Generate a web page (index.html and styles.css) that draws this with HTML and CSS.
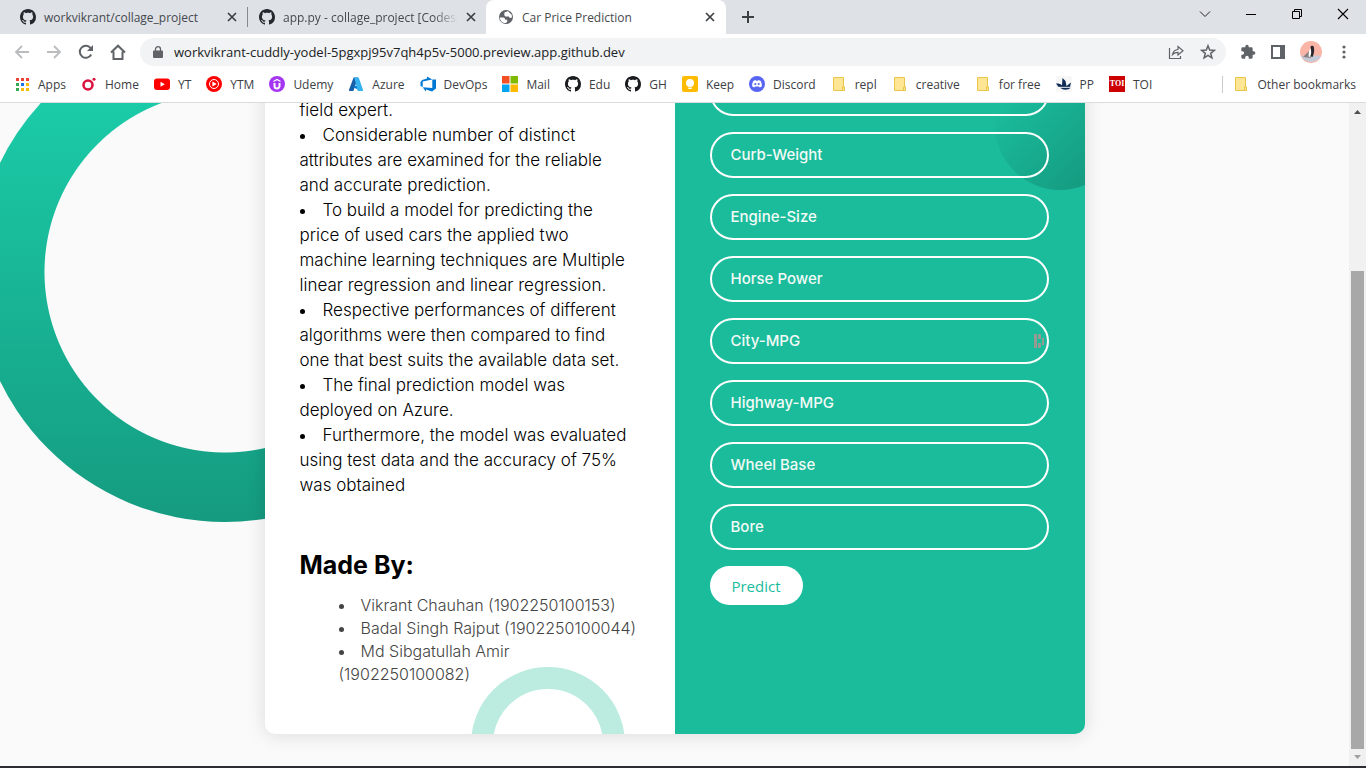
FILE: index.html
```html
<!DOCTYPE html>
<html lang="en">
<head>
<meta charset="utf-8">
<title>Car Price Prediction</title>
<link rel="stylesheet" href="styles.css">
</head>
<body>
<svg class="defs" aria-hidden="true">
  <symbol id="github" viewBox="0 0 16 16"><path fill-rule="evenodd" d="M8 0C3.58 0 0 3.58 0 8c0 3.54 2.29 6.53 5.47 7.59.4.07.55-.17.55-.38 0-.19-.01-.82-.01-1.49-2.01.37-2.53-.49-2.69-.94-.09-.23-.48-.94-.82-1.13-.28-.15-.68-.52-.01-.53.63-.01 1.08.58 1.23.82.72 1.21 1.87.87 2.33.66.07-.52.28-.87.51-1.07-1.78-.2-3.64-.89-3.64-3.95 0-.87.31-1.59.82-2.15-.08-.2-.36-1.02.08-2.12 0 0 .67-.21 2.2.82.64-.18 1.32-.27 2-.27s1.36.09 2 .27c1.53-1.04 2.2-.82 2.2-.82.44 1.1.16 1.92.08 2.12.51.56.82 1.27.82 2.15 0 3.07-1.87 3.75-3.65 3.95.29.25.54.73.54 1.48 0 1.07-.01 1.93-.01 2.2 0 .21.15.46.55.38A8 8 0 0 0 16 8c0-4.42-3.58-8-8-8z"/></symbol>
  <symbol id="cross" viewBox="0 0 10 10"><path d="M1 1l8 8M9 1L1 9" fill="none" stroke="#3c4043" stroke-width="1.7"/></symbol>
  <symbol id="folder" viewBox="0 0 16 16"><path d="M2.500 1.500h10v9.500h1v3.500h-11z" fill="#ffe694" stroke="#e8c54c"/><path d="M11.500 14.500v-3.500h2v3.500z" fill="#ffe694" stroke="#e8c54c"/></symbol>
</svg>
<header class="browser">
  <div class="tabs">
    <div class="tab">
      <svg class="icon"><use href="#github"/></svg>
      <span class="tab-title">workvikrant/collage_project</span>
      <button class="plain" aria-label="Close tab"><svg class="close"><use href="#cross"/></svg></button>
    </div>
    <div class="tab tab-second">
      <svg class="icon"><use href="#github"/></svg>
      <span class="tab-title tab-fade">app.py - collage_project [Codesp</span>
      <button class="plain" aria-label="Close tab"><svg class="close"><use href="#cross"/></svg></button>
    </div>
    <div class="tab tab-active">
      <svg class="icon" viewBox="0 0 16 16"><circle cx="8" cy="8" r="7" fill="#5f6368"/><path d="M1.800 8.500h3.400c1.300.2 2 1 2 2.300h2v2.300l-1.500 1C4.300 14 2 11.700 1.800 8.500zM6.300 5.200c0-1.600.8-2.400 2.200-2.400l1.300-.8 3.900 3.700.3 2.600c-1.400 1-2.700.7-3.200-.8H8.300c-1.300 0-2-.8-2-2.300z" fill="#fff"/></svg>
      <span class="tab-title">Car Price Prediction</span>
      <button class="plain" aria-label="Close tab"><svg class="close"><use href="#cross"/></svg></button>
    </div>
    <button class="plain new-tab" aria-label="New tab"><svg width="12" height="12" viewBox="0 0 12 12"><path d="M6 0v12M0 6h12" stroke="#3c4043" stroke-width="2"/></svg></button>
    <div class="window-buttons">
      <button class="plain" aria-label="Search tabs"><svg width="12" height="12" viewBox="0 0 12 12"><path d="M1 3.500l5 5 5-5" fill="none" stroke="#222"/></svg></button>
      <button class="plain" aria-label="Minimize"><svg width="12" height="12" viewBox="0 0 12 12"><path d="M1 6.500h10" stroke="#000"/></svg></button>
      <button class="plain" aria-label="Restore"><svg width="12" height="12" viewBox="0 0 12 12"><path d="M1.500 3.500h7v7h-7zM3.500 3.500v-2h7v7h-2" fill="none" stroke="#000"/></svg></button>
      <button class="plain" aria-label="Close"><svg width="12" height="12" viewBox="0 0 12 12"><path d="M1 1l10 10M11 1L1 11" stroke="#000" stroke-width="1.100"/></svg></button>
    </div>
  </div>
  <div class="toolbar">
    <div class="nav">
      <button class="plain" aria-label="Back"><svg class="icon" viewBox="0 0 16 16"><path d="M15 8H2M8 2L2 8l6 6" fill="none" stroke="#babcbe" stroke-width="1.800"/></svg></button>
      <button class="plain" aria-label="Forward"><svg class="icon" viewBox="0 0 16 16"><path d="M1 8h13M8 2l6 6-6 6" fill="none" stroke="#babcbe" stroke-width="1.800"/></svg></button>
      <button class="plain" aria-label="Reload"><svg class="icon" viewBox="0 0 16 16"><path d="M13.200 10.500A6 6 0 1 1 12.600 4.200" fill="none" stroke="#5f6368" stroke-width="2"/><path d="M15 1v6H9z" fill="#5f6368"/></svg></button>
      <button class="plain" aria-label="Home"><svg class="icon" viewBox="0 0 16 16"><path d="M1 8.500L8 1.700l7 6.800M3.500 7.500V15h9V7.500" fill="none" stroke="#5f6368" stroke-width="2"/></svg></button>
    </div>
    <div class="address">
      <svg class="lock" viewBox="0 0 10 12"><path d="M1 4.500h8a1 1 0 0 1 1 1V11a1 1 0 0 1-1 1H1a1 1 0 0 1-1-1V5.500a1 1 0 0 1 1-1z" fill="#5f6368"/><path d="M2.500 5V3.200a2.500 2.500 0 0 1 5 0V5" fill="none" stroke="#5f6368" stroke-width="1.300"/></svg>
      <input class="url" aria-label="Address" value="workvikrant-cuddly-yodel-5pgxpj95v7qh4p5v-5000.preview.app.github.dev">
      <button class="plain" aria-label="Share"><svg class="icon" viewBox="0 0 16 16"><path d="M1.500 4v10.500h11v-2.500" fill="none" stroke="#5f6368" stroke-width="1.200"/><path d="M4.500 10.500c.6-3 2.400-4.700 5.500-5V2.500l5 4.300-5 4.200V8.300c-2.600 0-4.100.7-5.500 2.200z" fill="none" stroke="#5f6368" stroke-width="1.200"/></svg></button>
      <button class="plain" aria-label="Bookmark"><svg class="icon" viewBox="0 0 16 16"><path d="M8 1.800l1.700 4.300 4.600.3-3.600 2.900 1.200 4.500L8 11.300l-3.900 2.500 1.200-4.500-3.600-2.900 4.600-.3z" fill="none" stroke="#5f6368" stroke-width="1.500"/></svg></button>
    </div>
    <div class="actions">
      <button class="plain" aria-label="Extensions"><svg class="icon" viewBox="0 0 24 24"><path d="M20.500 11H19V7a2 2 0 0 0-2-2h-4V3.500a2.500 2.500 0 0 0-5 0V5H4a2 2 0 0 0-2 2v3.800h1.500a2.700 2.700 0 0 1 0 5.400H2V20c0 1.100.9 2 2 2h3.800v-1.500a2.700 2.700 0 0 1 5.400 0V22H17a2 2 0 0 0 2-2v-4h1.500a2.500 2.500 0 0 0 0-5z" fill="#5f6368"/></svg></button>
      <button class="plain" aria-label="Side panel"><svg class="icon" viewBox="0 0 16 16"><path d="M1 1h14v14H1zM3 3v10h7V3z" fill="#5f6368" fill-rule="evenodd"/></svg></button>
      <button class="plain" aria-label="Profile"><svg width="22" height="22" viewBox="0 0 22 22"><circle cx="11" cy="11" r="11" fill="#fbb5a7"/><path d="M1 14.500h20A11 11 0 0 1 1 14.500z" fill="#c5cad9"/><path d="M3 16l6-6 2 7z" fill="#8a8080"/><path d="M10.500 6c.3-1.200 2.500-1.800 3.300-.3.800 3 .3 6.800-1.300 10.300l-2.700-1c1.500-3 1.500-5.500.7-9z" fill="#29262b"/><path d="M10.200 7.500c1.600 2.500 1.300 6-.4 8.500l-1.100-.5c-.2-3 .1-6 1.500-8z" fill="#fff"/></svg></button>
      <button class="plain" aria-label="Menu"><svg class="icon" viewBox="0 0 16 16" fill="#5f6368"><circle cx="8" cy="3" r="1.600"/><circle cx="8" cy="8" r="1.600"/><circle cx="8" cy="13" r="1.600"/></svg></button>
    </div>
  </div>
  <nav class="bookmarks">
    <a href="#apps"><svg class="icon" viewBox="0 0 16 16"><path d="M2 2h3v3H2zM7 2h3v3H7zM12 2h3v3h-3z" fill="#ea4335"/><path d="M2 7h3v3H2zM2 12h3v3H2z" fill="#34a853"/><path d="M7 7h3v3H7z" fill="#1a73e8"/><path d="M12 7h3v3h-3zM7 12h3v3H7zM12 12h3v3h-3z" fill="#fbbc04"/></svg>Apps</a>
    <a href="#home"><svg class="icon" viewBox="0 0 16 16"><circle cx="7" cy="9" r="4.500" fill="none" stroke="#d9123e" stroke-width="2.600"/><circle cx="13" cy="3.200" r="1.500" fill="#d9123e"/></svg>Home</a>
    <a href="#yt"><svg class="icon" viewBox="0 0 16 16"><rect y="2.500" width="16" height="11.500" rx="3" fill="#f00"/><path d="M6.500 5.800v5l4.300-2.500z" fill="#fff"/></svg>YT</a>
    <a href="#ytm"><svg class="icon" viewBox="0 0 16 16"><circle cx="8" cy="8" r="8" fill="#f00"/><circle cx="8" cy="8" r="4.500" fill="none" stroke="#fff"/><path d="M6.400 5.500v5L10.700 8z" fill="#fff"/></svg>YTM</a>
    <a href="#udemy"><svg class="icon" viewBox="0 0 16 16"><circle cx="8" cy="8" r="8" fill="#a435f0"/><path d="M5.500 7v3a2.500 2.500 0 0 0 5 0V7" fill="none" stroke="#fff" stroke-width="2"/><path d="M4.500 5.500L8 3.500l3.500 2" fill="none" stroke="#fff" stroke-width="1.300"/></svg>Udemy</a>
    <a href="#azure"><svg class="icon" viewBox="0 0 16 16"><path d="M5.600 1.500h4.500L5.400 15H2a1 1 0 0 1-1-1.300z" fill="#175fa9"/><path d="M5 10h6.500l1 5L5 11z" fill="#0078d4"/><path d="M6.200 1.500h4.500L15 13.700a1 1 0 0 1-1 1.300h-4.300z" fill="#34b3ee"/></svg>Azure</a>
    <a href="#devops"><svg class="icon" viewBox="0 0 16 16"><path d="M16 3.400v9l-4 3.200-6-2.100v2.200l-3.300-4.500 9.600.8V3.500zM12.300 3.600L7 .5v2.100L2.100 4 .5 6v4l2.200 1V5.500z" fill="#0078d4"/></svg>DevOps</a>
    <a href="#mail"><svg class="icon" viewBox="0 0 16 16"><path d="M0 0h7.500v7.500H0z" fill="#f25022"/><path d="M8.500 0H16v7.500H8.500z" fill="#7fba00"/><path d="M0 8.500h7.500V16H0z" fill="#00a4ef"/><path d="M8.500 8.500H16V16H8.500z" fill="#ffb900"/></svg>Mail</a>
    <a href="#edu"><svg class="icon"><use href="#github"/></svg>Edu</a>
    <a href="#gh"><svg class="icon"><use href="#github"/></svg>GH</a>
    <a href="#keep"><svg class="icon" viewBox="0 0 16 16"><rect width="16" height="16" rx="2" fill="#fb0"/><circle cx="8" cy="7" r="4" fill="#fff"/><path d="M6.300 10h3.400v3H6.300z" fill="#fff"/><path d="M6 11.300h4" stroke="#fb0" stroke-width=".7"/></svg>Keep</a>
    <a href="#discord"><svg class="icon" viewBox="0 0 16 16"><circle cx="8" cy="8" r="8" fill="#5865f2"/><path d="M4.600 4.800l2-.8.400.8h2l.4-.8 2 .8c1.200 1.800 1.600 3.600 1.400 5.600l-2.200 1.200-.6-1H6l-.6 1-2.200-1.200c-.2-2 .2-3.800 1.400-5.600z" fill="#fff"/><circle cx="6.300" cy="8" r="1.100" fill="#5865f2"/><circle cx="9.700" cy="8" r="1.100" fill="#5865f2"/></svg>Discord</a>
    <a href="#repl"><svg class="icon"><use href="#folder"/></svg>repl</a>
    <a href="#creative"><svg class="icon"><use href="#folder"/></svg>creative</a>
    <a href="#free"><svg class="icon"><use href="#folder"/></svg>for free</a>
    <a href="#pp"><svg class="icon" viewBox="0 0 16 16"><path d="M0 0h16v16H0z" fill="#f7f7f7"/><path d="M0 7.500c3 0 5 .5 6 2L6.500 2l3 3 1 5 4.500-3.500-1 4.500H2.500zM4 11.500h11c-3 3-8 3-11 0z" fill="#102a56"/><path d="M2 11.300h13" stroke="#fff" stroke-width=".7"/></svg>PP</a>
    <a href="#toi"><span class="toi">TOI</span>TOI</a>
    <a class="other" href="#other"><svg class="icon"><use href="#folder"/></svg>Other bookmarks</a>
  </nav>
</header>

<div class="viewport">
  <main class="page">
    <span class="ring-large"></span>
    <section class="card">
      <div class="about">
        <ul class="points">
          <li class="continued">field expert.</li>
          <li>Considerable number of distinct<br>attributes are examined for the reliable<br>and accurate prediction.</li>
          <li>To build a model for predicting the<br>price of used cars the applied two<br>machine learning techniques are Multiple<br>linear regression and linear regression.</li>
          <li>Respective performances of different<br>algorithms were then compared to find<br>one that best suits the available data set.</li>
          <li>The final prediction model was<br>deployed on Azure.</li>
          <li>Furthermore, the model was evaluated<br>using test data and the accuracy of 75%<br>was obtained</li>
        </ul>
        <h2>Made By:</h2>
        <ul class="authors">
          <li>Vikrant Chauhan (1902250100153)</li>
          <li>Badal Singh Rajput (1902250100044)</li>
          <li>Md Sibgatullah Amir<br>(1902250100082)</li>
        </ul>
        <span class="ring-small"></span>
      </div>
      <form class="form">
        <span class="disc"></span>
        <input class="field" aria-label="Car width">
        <input class="field" aria-label="Curb-Weight" placeholder="Curb-Weight">
        <input class="field" aria-label="Engine-Size" placeholder="Engine-Size">
        <input class="field" aria-label="Horse Power" placeholder="Horse Power">
        <div class="field-wrap">
          <input class="field" aria-label="City-MPG" placeholder="City-MPG">
          <svg class="autofill" viewBox="0 0 12 14" fill="#959a92"><path d="M1 0h3v14H1zM5 0h2l1 1v4H5zM5 9h3v4l-1 1H5zM9 4h2v7H9z"/></svg>
        </div>
        <input class="field" aria-label="Highway-MPG" placeholder="Highway-MPG">
        <input class="field" aria-label="Wheel Base" placeholder="Wheel Base">
        <input class="field" aria-label="Bore" placeholder="Bore">
        <button class="predict" type="button">Predict</button>
      </form>
    </section>
  </main>
  <div class="scrollbar" aria-hidden="true">
    <svg class="arrow" viewBox="0 0 17 17"><path d="M5 11l3.500-4 3.500 4z" fill="#505050"/></svg>
    <div class="track"><div class="thumb"></div></div>
    <svg class="arrow" viewBox="0 0 17 17"><path d="M5 6l3.500 4L12 6z" fill="#a0a0a0"/></svg>
  </div>
</div>
<footer class="taskbar"></footer>
</body>
</html>
```
FILE: styles.css
```css
* { box-sizing: border-box; }

body {
  margin: 0;
  height: 100vh;
  display: flex;
  flex-direction: column;
  overflow: hidden;
  font-family: "Open Sans", "Noto Sans", sans-serif;
  font-size: 12px;
  color: #3c4043;
  background: #fafafa;
}

.defs { display: none; }
.icon { width: 16px; height: 16px; flex: none; }

.plain {
  display: flex;
  align-items: center;
  justify-content: center;
  padding: 0;
  border: 0;
  background: none;
}

/* Browser frame */
.browser { background: #fff; border-bottom: 1px solid #d9dbde; flex: none; }

.tabs { display: flex; height: 34px; background: #dee1e6; }

.tab {
  display: flex;
  align-items: center;
  gap: 8px;
  flex: none;
  width: 240px;
  padding: 0 11px 0 12px;
  color: #45494d;
}
.tab:first-child {
  width: 248px;
  padding-left: 20px;
  background: linear-gradient(#85888c, #85888c) right center / 1px 20px no-repeat;
}
.tab-second { width: 238px; padding-left: 11px; padding-right: 10px; }
.tab-active { background: #fff; border-radius: 8px 8px 0 0; }
.tab-title { flex: 1; min-width: 0; white-space: nowrap; }
.tab-fade { mask-image: linear-gradient(to right, #000 86%, transparent); }
.tab svg.icon { fill: #24292f; }
.close { width: 10px; height: 10px; }
.new-tab { width: 44px; }
.window-buttons { display: flex; margin-left: auto; height: 28px; }
.window-buttons .plain { width: 46px; }

.toolbar { display: flex; align-items: center; height: 36px; padding: 0 14px; }
.nav { display: flex; gap: 16px; padding-right: 14px; }
.address {
  display: flex;
  align-items: center;
  gap: 16px;
  flex: 1;
  height: 28px;
  padding: 0 10px 0 13px;
  border-radius: 14px;
  background: #f1f3f4;
}
.lock { width: 10px; height: 12px; }
.url {
  flex: 1;
  min-width: 0;
  margin-left: -5px;
  padding: 0;
  border: 0;
  background: none;
  font: 13px "Open Sans", sans-serif;
  color: #202124;
}
.actions { display: flex; align-items: center; gap: 14px; padding-left: 14px; }

.bookmarks { display: flex; align-items: center; gap: 15px; height: 32px; padding: 0 10px 4px 14px; }
.bookmarks a { display: flex; align-items: center; gap: 8px; color: #3c4043; text-decoration: none; white-space: nowrap; }
.bookmarks .icon { fill: #191b1f; }
.bookmarks .other { margin-left: auto; padding-left: 10px; border-left: 1px solid #c9cbce; }
.toi {
  width: 16px;
  height: 16px;
  background: #c00;
  color: #fff;
  font: bold 8px/16px "Liberation Serif", serif;
  text-align: center;
}

/* Web page */
.viewport { flex: 1; min-height: 0; display: flex; overflow: hidden; }
.page {
  position: relative;
  flex: 1;
  display: flex;
  flex-direction: column;
  justify-content: flex-end;
  align-items: center;
  padding-bottom: 32px;
  overflow: hidden;
  font-family: Inter, sans-serif;
}

.ring-large {
  position: absolute;
  left: -25px;
  bottom: 244px;
  width: 500px;
  height: 500px;
  border-radius: 50%;
  background: radial-gradient(circle, #fafafa 180px, transparent 181px), linear-gradient(#1cd4af, #159b80);
}

.card {
  position: relative;
  display: grid;
  grid-template-columns: 1fr 1fr;
  width: 100%;
  max-width: 820px;
  border-radius: 10px;
  background: #fff;
  box-shadow: 0 0 20px 1px rgba(0, 0, 0, 0.1), 0 5px 20px 1px rgba(0, 0, 0, 0.02);
  overflow: hidden;
  flex: none;
}

.about {
  position: relative;
  display: flex;
  flex-direction: column;
  justify-content: flex-end;
  padding: 0 35px 48px;
  color: #000;
  white-space: nowrap;
}
.points, .authors { margin: 0; padding: 0; list-style-position: inside; }
.points { font-size: 17px; font-weight: 300; line-height: 25px; }
.continued { list-style: none; }
.about h2 { margin: 48px 0 10px; font-size: 25px; line-height: 38px; font-weight: 700; }
.authors { padding-left: 39px; font-size: 16px; font-weight: 300; line-height: 23px; color: #444; }
.ring-small {
  position: absolute;
  right: 50px;
  bottom: -87px;
  width: 154px;
  height: 154px;
  border: 22px solid #bcebe0;
  border-radius: 50%;
}

.form {
  position: relative;
  display: flex;
  flex-direction: column;
  justify-content: flex-end;
  gap: 16px;
  padding: 0 36px 129px 35px;
  background: #1abc9c;
}
.disc {
  position: absolute;
  right: -40px;
  bottom: 544px;
  width: 130px;
  height: 130px;
  border-radius: 50%;
  background: linear-gradient(135deg, transparent 20%, #149279);
}
.field-wrap { position: relative; display: flex; }
.field {
  position: relative;
  width: 100%;
  height: 46px;
  padding: 0 19px 2px;
  border: 2px solid #fff;
  border-radius: 23px;
  background: none;
  color: #fff;
  font: 500 15px Inter, sans-serif;
}
.field::placeholder { color: #f3faf6; opacity: 1; }
.autofill { position: absolute; right: 4px; top: 16px; width: 12px; height: 14px; }
.predict {
  align-self: flex-start;
  width: 93px;
  height: 39px;
  border: 0;
  border-radius: 20px;
  background: #fff;
  color: #1abc9c;
  font: 15px "Open Sans", sans-serif;
}

.scrollbar { display: flex; flex-direction: column; width: 17px; background: #f1f1f1; }
.arrow { width: 17px; height: 17px; flex: none; }
.track { flex: 1; display: flex; flex-direction: column; justify-content: flex-end; padding: 0 2px; }
.thumb { height: 76%; background: #a8a8a8; }

.taskbar { flex: none; height: 2px; background: #2b2d33; }
```
